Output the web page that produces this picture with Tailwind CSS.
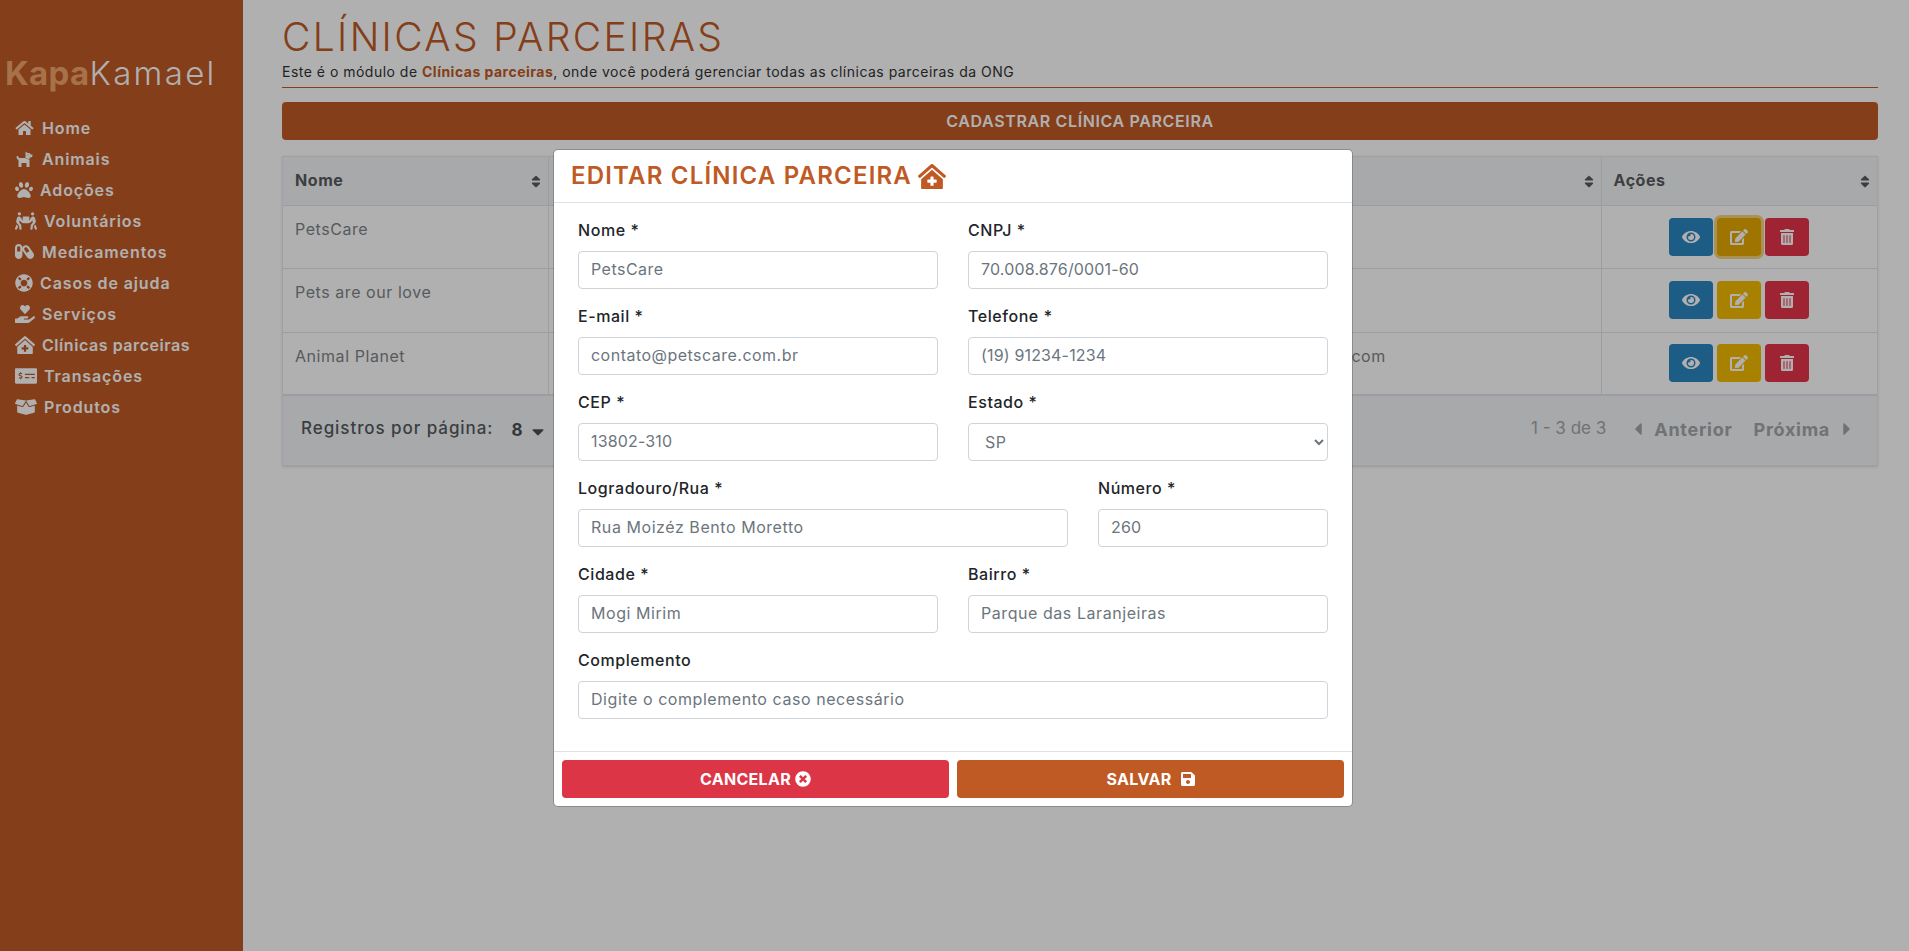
<!DOCTYPE html>
<html lang="pt-BR">
<head>
  <meta charset="UTF-8" />
  <meta name="viewport" content="width=device-width, initial-scale=1.0"/>
  <title>Clínicas parceiras - KapaKamael</title>
  <script src="https://cdn.jsdelivr.net/npm/@tailwindcss/browser@4"></script>
</head>
<body class="relative h-[951px] overflow-hidden bg-white font-[Inter,sans-serif] text-[#212529]">

  <div class="flex h-[951px]">
    <!-- menu lateral -->
    <aside class="w-[243px] shrink-0 bg-[#c05a25] text-white">
      <div class="pt-[49px] pl-[5px] text-[33px] leading-[48px] whitespace-nowrap">
        <span class="font-bold text-[#f0a56b] tracking-[0.01em]">Kapa</span><span class="font-light tracking-[0.07em]">Kamael</span>
      </div>
      <nav class="mt-[15px] pl-[15px] text-[16px] font-semibold tracking-[0.055em]">
        <a class="flex h-[31px] items-center gap-[8px]">
          <svg class="w-[19px] h-[16px]" viewBox="0 0 576 512" fill="currentColor"><path d="M280.37 148.26L96 300.11V464a16 16 0 0 0 16 16l112.06-.29a16 16 0 0 0 15.92-16V368a16 16 0 0 1 16-16h64a16 16 0 0 1 16 16v95.64a16 16 0 0 0 16 16.05L464 480a16 16 0 0 0 16-16V300L295.67 148.26a12.19 12.19 0 0 0-15.3 0zM571.6 251.47L488 182.56V44.05a12 12 0 0 0-12-12h-56a12 12 0 0 0-12 12v72.61L318.47 43a48 48 0 0 0-61 0L4.34 251.47a12 12 0 0 0-1.6 16.9l25.5 31A12 12 0 0 0 45.15 301l235.22-193.74a12.19 12.19 0 0 1 15.3 0L530.9 301a12 12 0 0 0 16.9-1.6l25.5-31a12 12 0 0 0-1.7-16.93z"/></svg>
          Home
        </a>
        <a class="flex h-[31px] items-center gap-[8px]">
          <svg class="w-[19px] h-[16px]" viewBox="0 0 576 512" fill="currentColor"><path fill-rule="evenodd" d="M298.06 224L448 277.55V496a16 16 0 0 1-16 16H368a16 16 0 0 1-16-16V384H192V496a16 16 0 0 1-16 16H112a16 16 0 0 1-16-16V282.09C58.84 268.84 32 233.66 32 192a32 32 0 1 1 64 0 32.06 32.06 0 0 0 32 32zM544 112H480L465.69 83.38A32 32 0 0 0 437.06 64H384L320 16V221.68L448 267.39V208h32a64 64 0 0 0 64-64V128a16 16 0 0 0-16-16zM400 144a16 16 0 1 1 16-16 16 16 0 0 1-16 16z"/></svg>
          Animais
        </a>
        <a class="flex h-[31px] items-center gap-[7px]">
          <svg class="w-[18px] h-[18px]" viewBox="0 0 512 512" fill="currentColor"><path d="M256 224c-79.41 0-192 122.76-192 200.25 0 34.9 26.81 55.75 71.74 55.75 48.84 0 81.09-25.08 120.26-25.08 39.51 0 71.85 25.08 120.26 25.08 44.93 0 71.74-20.85 71.74-55.75C448 346.76 335.41 224 256 224zm-147.28-12.61c-10.4-34.65-42.44-57.09-71.56-50.13-29.12 6.96-44.29 40.69-33.89 75.34 10.4 34.65 42.44 57.09 71.56 50.13 29.12-6.96 44.29-40.69 33.89-75.34zm84.72-20.78c30.94-8.14 46.42-49.94 34.58-93.36s-46.52-72.01-77.46-63.87-46.42 49.94-34.58 93.36c11.84 43.42 46.52 72.02 77.46 63.87zm281.39-29.34c-29.12-6.96-61.15 15.48-71.56 50.13-10.4 34.65 4.77 68.38 33.89 75.34 29.12 6.96 61.15-15.48 71.56-50.13 10.4-34.65-4.77-68.38-33.89-75.34zm-156.27 29.34c30.94 8.14 65.62-20.45 77.46-63.87 11.84-43.42-3.64-85.21-34.58-93.36s-65.62 20.45-77.46 63.87c-11.84 43.42 3.64 85.22 34.58 93.36z"/></svg>
          Adoções
        </a>
        <a class="flex h-[31px] items-center gap-[7px]">
          <svg class="w-[22px] h-[18px]" viewBox="0 0 640 512" fill="currentColor"><path d="M128 96c26.5 0 48-21.5 48-48S154.5 0 128 0 80 21.5 80 48s21.5 48 48 48zm384 0c26.5 0 48-21.5 48-48S538.5 0 512 0s-48 21.5-48 48 21.5 48 48 48zm125.7 372.1l-44-110-41.1 46.4-2 18.2 27.7 69.2c5 12.5 17 20.1 29.7 20.1 4 0 8-.7 11.9-2.3 16.4-6.6 24.4-25.2 17.8-41.6zm-34.2-209.8L585 178.1c-4.6-20-18.6-36.8-37.5-44.9-18.5-8-39-6.7-56.1 3.3-22.7 13.4-39.7 34.5-48.1 59.4L432 229.8 416 240v-96c0-8.8-7.2-16-16-16H240c-8.8 0-16 7.2-16 16v96l-16.1-10.2-11.3-33.9c-8.3-25-25.4-46-48.1-59.4-17.2-10-37.6-11.3-56.1-3.3-18.9 8.1-32.9 24.9-37.5 44.9l-18.4 80.2c-4.6 20 .7 41.2 14.4 56.7l67.2 75.9 10.1 92.6C130 499.8 143.8 512 160 512c1.2 0 2.3-.1 3.5-.2 17.6-1.9 30.2-17.7 28.3-35.3l-10.1-92.8c-1.5-13-6.9-25.1-15.6-35l-43.3-49 17.6-70.3 6.8 20.4c4.1 12.5 11.9 23.4 24.5 32.6l51.1 32.5c4.6 2.9 12.1 4.6 17.2 5h160c5.1-.4 12.6-2.1 17.2-5l51.1-32.5c12.6-9.2 20.4-20 24.5-32.6l6.8-20.4 17.6 70.3-43.3 49c-8.7 9.9-14.1 22-15.6 35l-10.1 92.8c-1.9 17.6 10.8 33.4 28.3 35.3 1.2.1 2.3.2 3.5.2 16.1 0 30-12.1 31.8-28.5l10.1-92.6 67.2-75.9c13.6-15.5 19-36.7 14.4-56.7zM46.3 358.1l-44 110c-6.6 16.4 1.4 35 17.8 41.6 16.8 6.6 35.1-1.7 41.6-17.8l27.7-69.2-2-18.2-41.1-46.4z"/></svg>
          Voluntários
        </a>
        <a class="flex h-[31px] items-center gap-[8px]">
          <svg class="w-[19px] h-[17px]" viewBox="0 0 576 512" fill="currentColor"><path d="M555.3 300.1L424.2 112.8C401.9 81 366.4 64 330.4 64c-22.6 0-45.5 6.7-65.5 20.7-19.7 13.8-33.7 32.8-41.5 53.8C220.5 79.2 172 32 112 32 50.1 32 0 82.1 0 144v224c0 61.9 50.1 112 112 112s112-50.1 112-112V218.9c3.3 8.6 7.3 17.1 12.8 25L368 431.2c22.2 31.8 57.7 48.8 93.8 48.8 22.7 0 45.5-6.7 65.5-20.7 51.7-36.2 64.2-107.5 28-159.2zM160 256H64V144c0-26.5 21.5-48 48-48s48 21.5 48 48v112zm194.8 44.9l-65.6-93.7c-7.7-11-10.7-24.4-8.3-37.6 2.3-13.2 9.7-24.8 20.7-32.5 8.5-6 18.5-9.1 28.8-9.1 16.5 0 31.9 8 41.3 21.5l65.6 93.7-82.5 57.7z"/></svg>
          Medicamentos
        </a>
        <a class="flex h-[31px] items-center gap-[7px]">
          <svg class="w-[18px] h-[18px]" viewBox="0 0 512 512" fill="currentColor"><path d="M256 8C119.033 8 8 119.033 8 256s111.033 248 248 248 248-111.033 248-248S392.967 8 256 8zm173.696 119.559l-63.399 63.399c-10.987-18.559-26.67-34.252-45.255-45.255l63.399-63.399a218.396 218.396 0 0 1 45.255 45.255zM256 352c-53.019 0-96-42.981-96-96s42.981-96 96-96 96 42.981 96 96-42.981 96-96 96zM127.559 82.304l63.399 63.399c-18.559 10.987-34.252 26.67-45.255 45.255l-63.399-63.399a218.372 218.372 0 0 1 45.255-45.255zM82.304 384.441l63.399-63.399c10.987 18.559 26.67 34.252 45.255 45.255l-63.399 63.399a218.396 218.396 0 0 1-45.255-45.255zm302.137 45.255l-63.399-63.399c18.559-10.987 34.252-26.67 45.255-45.255l63.399 63.399a218.403 218.403 0 0 1-45.255 45.255z"/></svg>
          Casos de ajuda
        </a>
        <a class="flex h-[31px] items-center gap-[7px]">
          <svg class="w-[20px] h-[18px]" viewBox="0 0 576 512" fill="currentColor"><path d="M275.3 250.5c7 7.4 18.4 7.4 25.5 0l108.9-114.2c31.6-33.2 29.8-88.2-5.6-118.8-30.8-26.7-76.7-21.9-104.9 7.7L288 36.9l-11.1-11.6C248.7-4.4 202.8-9.2 172 17.5c-35.3 30.6-37.2 85.6-5.6 118.8l108.9 114.2zm290 77.6c-11.8-10.7-30.2-10-42.6 0L430.3 402c-11.3 9.1-25.4 14-40 14H272c-8.8 0-16-7.2-16-16s7.2-16 16-16h78.3c15.9 0 30.7-10.9 33.3-26.6 3.3-20-12.1-37.4-31.6-37.4H192c-27 0-53.1 9.3-74.1 26.3L71.4 384H16c-8.8 0-16 7.2-16 16v96c0 8.8 7.2 16 16 16h356.8c14.5 0 28.6-4.9 40-14L564 377c15.2-12.1 16.4-35.3 1.3-48.9z"/></svg>
          Serviços
        </a>
        <a class="flex h-[31px] items-center gap-[7px]">
          <svg class="w-[20px] h-[18px]" viewBox="0 0 576 512" fill="currentColor"><path d="M288 115L69.47 307.71c-1.62 1.46-3.69 2.14-5.47 3.35V496a16 16 0 0 0 16 16h416a16 16 0 0 0 16-16V311.1c-1.7-1.16-3.72-1.82-5.26-3.2zm96 261a8 8 0 0 1-8 8h-56v56a8 8 0 0 1-8 8h-48a8 8 0 0 1-8-8v-56h-56a8 8 0 0 1-8-8v-48a8 8 0 0 1 8-8h56v-56a8 8 0 0 1 8-8h48a8 8 0 0 1 8 8v56h56a8 8 0 0 1 8 8zm186.69-139.72l-255.94-226a39.85 39.85 0 0 0-53.45 0l-256 226a16 16 0 0 0-1.21 22.6L25.5 282.7a16 16 0 0 0 22.6 1.21L277.42 81.63a16 16 0 0 1 21.17 0L527.91 283.9a16 16 0 0 0 22.6-1.21l21.4-23.82a16 16 0 0 0-1.22-22.59z"/></svg>
          <span class="tracking-[0.035em]">Clínicas parceiras</span>
        </a>
        <a class="flex h-[31px] items-center gap-[7px]">
          <svg class="w-[22px] h-[18px]" viewBox="0 0 640 512" fill="currentColor"><path d="M608 32H32C14.33 32 0 46.33 0 64v384c0 17.67 14.33 32 32 32h576c17.67 0 32-14.33 32-32V64c0-17.67-14.33-32-32-32zM176 327.88V344c0 4.42-3.58 8-8 8h-16c-4.42 0-8-3.58-8-8v-16.29c-11.29-.58-22.27-4.52-31.37-11.35-3.9-2.93-4.1-8.77-.57-12.14l11.75-11.21c2.77-2.64 6.89-2.76 10.13-.73 3.87 2.42 8.26 3.72 12.82 3.72h28.11c6.5 0 11.8-5.92 11.8-13.19 0-5.95-3.61-11.19-8.77-12.73l-45-13.5c-18.59-5.58-31.58-23.42-31.58-43.39 0-24.52 19.05-44.44 42.67-45.07V152c0-4.42 3.58-8 8-8h16c4.42 0 8 3.58 8 8v16.29c11.29.58 22.27 4.51 31.37 11.35 3.9 2.93 4.1 8.77.57 12.14l-11.75 11.21c-2.77 2.64-6.89 2.76-10.13.73-3.87-2.43-8.26-3.72-12.82-3.72h-28.11c-6.5 0-11.8 5.92-11.8 13.19 0 5.95 3.61 11.19 8.77 12.73l45 13.5c18.59 5.58 31.58 23.42 31.58 43.39 0 24.53-19.05 44.44-42.67 45.07zM416 312c0 4.42-3.58 8-8 8H296c-4.42 0-8-3.58-8-8v-16c0-4.42 3.58-8 8-8h112c4.42 0 8 3.58 8 8v16zm160 0c0 4.42-3.58 8-8 8h-80c-4.42 0-8-3.58-8-8v-16c0-4.42 3.58-8 8-8h80c4.42 0 8 3.58 8 8v16zm0-96c0 4.42-3.58 8-8 8H296c-4.42 0-8-3.58-8-8v-16c0-4.42 3.58-8 8-8h272c4.42 0 8 3.58 8 8v16z"/></svg>
          Transações
        </a>
        <a class="flex h-[31px] items-center gap-[7px]">
          <svg class="w-[22px] h-[18px]" viewBox="0 0 640 512" fill="currentColor"><path d="M425.7 256c-16.9 0-32.8-9-41.4-23.4L320 126l-64.2 106.6c-8.7 14.5-24.6 23.5-41.5 23.5-4.5 0-9-.6-13.3-1.9L64 215v178c0 14.7 10 27.5 24.2 31l216.2 54.1c10.2 2.5 20.9 2.5 31 0L551.8 424c14.2-3.6 24.2-16.4 24.2-31V215l-137 39.1c-4.3 1.3-8.8 1.9-13.3 1.9zm212.6-112.2L586.8 41c-3.1-6.2-9.8-9.8-16.7-8.9L320 64l91.7 152.1c3.8 6.3 11.4 9.3 18.5 7.3l197.9-56.5c9.9-2.9 14.7-13.9 10.2-23.1zM53.2 41L1.7 143.8c-4.6 9.2.3 20.2 10.1 23l197.9 56.5c7.1 2 14.7-1 18.5-7.3L320 64 69.8 32.1c-6.9-.8-13.5 2.7-16.6 8.9z"/></svg>
          Produtos
        </a>
      </nav>
    </aside>

    <!-- conteudo -->
    <main class="flex-1 min-w-0 pl-[39px] pr-[31px]">
      <h1 class="pt-[13px] text-[39px] leading-[48px] font-light text-[#c05a25] tracking-[0.06em]">CLÍNICAS PARCEIRAS</h1>
      <p class="text-[14px] leading-[21px] tracking-[0.035em] text-[#333]">Este é o módulo de <b class="font-bold text-[#c05a25]">Clínicas parceiras</b>, onde você poderá gerenciar todas as clínicas parceiras da ONG</p>
      <hr class="mt-[5px] border-0 border-t border-[#c05a25]" />
      <button class="mt-[14px] block w-full h-[38px] rounded-[4px] bg-[#c05a25] text-white text-[16px] font-semibold tracking-[0.04em]">CADASTRAR CLÍNICA PARCEIRA</button>

      <div class="mt-[16px] border border-[#e6e6ee] shadow-sm">
        <table class="w-full table-fixed border-collapse text-[16px] tracking-[0.035em]">
          <colgroup>
            <col class="w-[265px]" />
            <col class="w-[567px]" />
            <col />
            <col class="w-[276px]" />
          </colgroup>
          <thead class="bg-[#f4f5f7] text-[#585b5f]">
            <tr class="h-[48px] border-b border-[#e2e4ea]">
              <th class="relative border-r border-[#e2e4ea] px-[12px] pb-[1px] text-left font-bold">Nome
                <svg class="absolute right-[7px] top-[17px] w-[10px] h-[15px]" viewBox="0 0 320 512" fill="currentColor"><path d="M41 288h238c21.4 0 32.1 25.9 17 41L177 448c-9.4 9.4-24.6 9.4-33.9 0L24 329c-15.1-15.1-4.4-41 17-41zm255-105L177 64c-9.4-9.4-24.6-9.4-33.9 0L24 183c-15.1 15.1-4.4 41 17 41h238c21.4 0 32.1-25.9 17-41z"/></svg>
              </th>
              <th class="border-r border-[#e2e4ea] px-[12px] text-left font-bold">CNPJ</th>
              <th class="relative border-r border-[#e2e4ea] px-[12px] text-left font-bold">E-mail
                <svg class="absolute right-[7px] top-[17px] w-[10px] h-[15px]" viewBox="0 0 320 512" fill="currentColor"><path d="M41 288h238c21.4 0 32.1 25.9 17 41L177 448c-9.4 9.4-24.6 9.4-33.9 0L24 329c-15.1-15.1-4.4-41 17-41zm255-105L177 64c-9.4-9.4-24.6-9.4-33.9 0L24 183c-15.1 15.1-4.4 41 17 41h238c21.4 0 32.1-25.9 17-41z"/></svg>
              </th>
              <th class="relative px-[12px] pb-[1px] text-left font-bold">Ações
                <svg class="absolute right-[7px] top-[17px] w-[10px] h-[15px]" viewBox="0 0 320 512" fill="currentColor"><path d="M41 288h238c21.4 0 32.1 25.9 17 41L177 448c-9.4 9.4-24.6 9.4-33.9 0L24 329c-15.1-15.1-4.4-41 17-41zm255-105L177 64c-9.4-9.4-24.6-9.4-33.9 0L24 183c-15.1 15.1-4.4 41 17 41h238c21.4 0 32.1-25.9 17-41z"/></svg>
              </th>
            </tr>
          </thead>
          <tbody class="text-[#7f8489]">
            <tr class="h-[63px] border-b border-[#e2e4ea]">
              <td class="border-r border-[#e2e4ea] px-[12px] pt-[11px] align-top">PetsCare</td>
              <td class="border-r border-[#e2e4ea] px-[12px] pt-[11px] align-top">70.008.876/0001-60</td>
              <td class="border-r border-[#e2e4ea] px-[12px] pt-[11px] align-top">contato@petscare.com.br</td>
              <td class="align-middle">
                <div class="flex justify-center gap-[4px]">
                  <button class="flex h-[38px] w-[44px] items-center justify-center rounded-[4px] bg-[#2a86c1] text-white">
                    <svg class="w-[18px] h-[16px]" viewBox="0 0 576 512" fill="currentColor"><path d="M572.52 241.4C518.29 135.59 410.93 64 288 64S57.68 135.64 3.48 241.41a32.35 32.35 0 0 0 0 29.19C57.71 376.41 165.07 448 288 448s230.32-71.64 284.52-177.41a32.35 32.35 0 0 0 0-29.19zM288 400a144 144 0 1 1 144-144 143.93 143.93 0 0 1-144 144zm0-240a95.31 95.31 0 0 0-25.31 3.79 47.85 47.85 0 0 1-66.9 66.9A95.78 95.78 0 1 0 288 160z"/></svg>
                  </button>
                  <button class="flex h-[38px] w-[44px] items-center justify-center rounded-[4px] bg-[#e8a900] text-white ring-[3px] ring-[#e8a900]/50">
                    <svg class="w-[18px] h-[16px]" viewBox="0 0 576 512" fill="currentColor"><path d="M402.6 83.2l90.2 90.2c3.8 3.8 3.8 10 0 13.8L274.4 405.6l-92.8 10.3c-12.4 1.4-22.9-9.1-21.5-21.5l10.3-92.8L388.8 83.2c3.8-3.8 10-3.8 13.8 0zm162-22.9l-48.8-48.8c-15.2-15.2-39.9-15.2-55.2 0l-35.4 35.4c-3.8 3.8-3.8 10 0 13.8l90.2 90.2c3.8 3.8 10 3.8 13.8 0l35.4-35.4c15.2-15.3 15.2-40 0-55.2zM384 346.2V448H64V128h229.8c3.2 0 6.2-1.3 8.5-3.5l40-40c7.6-7.6 2.2-20.5-8.5-20.5H48C21.5 64 0 85.5 0 112v352c0 26.5 21.5 48 48 48h352c26.5 0 48-21.5 48-48V306.2c0-10.7-12.9-16-20.5-8.5l-40 40c-2.2 2.3-3.5 5.3-3.5 8.5z"/></svg>
                  </button>
                  <button class="flex h-[38px] w-[44px] items-center justify-center rounded-[4px] bg-[#e5344a] text-white">
                    <svg class="w-[14px] h-[16px]" viewBox="0 0 448 512" fill="currentColor"><path d="M32 464a48 48 0 0 0 48 48h288a48 48 0 0 0 48-48V128H32zm272-256a16 16 0 0 1 32 0v224a16 16 0 0 1-32 0zm-96 0a16 16 0 0 1 32 0v224a16 16 0 0 1-32 0zm-96 0a16 16 0 0 1 32 0v224a16 16 0 0 1-32 0zM432 32H312l-9.4-18.7A24 24 0 0 0 281.1 0H166.8a23.72 23.72 0 0 0-21.4 13.3L136 32H16A16 16 0 0 0 0 48v32a16 16 0 0 0 16 16h416a16 16 0 0 0 16-16V48a16 16 0 0 0-16-16z"/></svg>
                  </button>
                </div>
              </td>
            </tr>
            <tr class="h-[64px] border-b border-[#e2e4ea]">
              <td class="border-r border-[#e2e4ea] px-[12px] pt-[11px] align-top">Pets are our love</td>
              <td class="border-r border-[#e2e4ea] px-[12px] pt-[11px] align-top">12.345.678/0001-90</td>
              <td class="border-r border-[#e2e4ea] px-[12px] pt-[11px] align-top">contato@petslove.com</td>
              <td class="align-middle">
                <div class="flex justify-center gap-[4px]">
                  <button class="flex h-[38px] w-[44px] items-center justify-center rounded-[4px] bg-[#2a86c1] text-white">
                    <svg class="w-[18px] h-[16px]" viewBox="0 0 576 512" fill="currentColor"><path d="M572.52 241.4C518.29 135.59 410.93 64 288 64S57.68 135.64 3.48 241.41a32.35 32.35 0 0 0 0 29.19C57.71 376.41 165.07 448 288 448s230.32-71.64 284.52-177.41a32.35 32.35 0 0 0 0-29.19zM288 400a144 144 0 1 1 144-144 143.93 143.93 0 0 1-144 144zm0-240a95.31 95.31 0 0 0-25.31 3.79 47.85 47.85 0 0 1-66.9 66.9A95.78 95.78 0 1 0 288 160z"/></svg>
                  </button>
                  <button class="flex h-[38px] w-[44px] items-center justify-center rounded-[4px] bg-[#f5bb00] text-white">
                    <svg class="w-[18px] h-[16px]" viewBox="0 0 576 512" fill="currentColor"><path d="M402.6 83.2l90.2 90.2c3.8 3.8 3.8 10 0 13.8L274.4 405.6l-92.8 10.3c-12.4 1.4-22.9-9.1-21.5-21.5l10.3-92.8L388.8 83.2c3.8-3.8 10-3.8 13.8 0zm162-22.9l-48.8-48.8c-15.2-15.2-39.9-15.2-55.2 0l-35.4 35.4c-3.8 3.8-3.8 10 0 13.8l90.2 90.2c3.8 3.8 10 3.8 13.8 0l35.4-35.4c15.2-15.3 15.2-40 0-55.2zM384 346.2V448H64V128h229.8c3.2 0 6.2-1.3 8.5-3.5l40-40c7.6-7.6 2.2-20.5-8.5-20.5H48C21.5 64 0 85.5 0 112v352c0 26.5 21.5 48 48 48h352c26.5 0 48-21.5 48-48V306.2c0-10.7-12.9-16-20.5-8.5l-40 40c-2.2 2.3-3.5 5.3-3.5 8.5z"/></svg>
                  </button>
                  <button class="flex h-[38px] w-[44px] items-center justify-center rounded-[4px] bg-[#e5344a] text-white">
                    <svg class="w-[14px] h-[16px]" viewBox="0 0 448 512" fill="currentColor"><path d="M32 464a48 48 0 0 0 48 48h288a48 48 0 0 0 48-48V128H32zm272-256a16 16 0 0 1 32 0v224a16 16 0 0 1-32 0zm-96 0a16 16 0 0 1 32 0v224a16 16 0 0 1-32 0zm-96 0a16 16 0 0 1 32 0v224a16 16 0 0 1-32 0zM432 32H312l-9.4-18.7A24 24 0 0 0 281.1 0H166.8a23.72 23.72 0 0 0-21.4 13.3L136 32H16A16 16 0 0 0 0 48v32a16 16 0 0 0 16 16h416a16 16 0 0 0 16-16V48a16 16 0 0 0-16-16z"/></svg>
                  </button>
                </div>
              </td>
            </tr>
            <tr class="h-[63px] border-b-2 border-[#e2e4ea]">
              <td class="border-r border-[#e2e4ea] px-[12px] pt-[11px] align-top">Animal Planet</td>
              <td class="border-r border-[#e2e4ea] px-[12px] pt-[11px] align-top">98.765.432/0001-10</td>
              <td class="border-r border-[#e2e4ea] px-[12px] pt-[11px] align-top">atendimento@animalplanet.com</td>
              <td class="align-middle">
                <div class="flex justify-center gap-[4px]">
                  <button class="flex h-[38px] w-[44px] items-center justify-center rounded-[4px] bg-[#2a86c1] text-white">
                    <svg class="w-[18px] h-[16px]" viewBox="0 0 576 512" fill="currentColor"><path d="M572.52 241.4C518.29 135.59 410.93 64 288 64S57.68 135.64 3.48 241.41a32.35 32.35 0 0 0 0 29.19C57.71 376.41 165.07 448 288 448s230.32-71.64 284.52-177.41a32.35 32.35 0 0 0 0-29.19zM288 400a144 144 0 1 1 144-144 143.93 143.93 0 0 1-144 144zm0-240a95.31 95.31 0 0 0-25.31 3.79 47.85 47.85 0 0 1-66.9 66.9A95.78 95.78 0 1 0 288 160z"/></svg>
                  </button>
                  <button class="flex h-[38px] w-[44px] items-center justify-center rounded-[4px] bg-[#f5bb00] text-white">
                    <svg class="w-[18px] h-[16px]" viewBox="0 0 576 512" fill="currentColor"><path d="M402.6 83.2l90.2 90.2c3.8 3.8 3.8 10 0 13.8L274.4 405.6l-92.8 10.3c-12.4 1.4-22.9-9.1-21.5-21.5l10.3-92.8L388.8 83.2c3.8-3.8 10-3.8 13.8 0zm162-22.9l-48.8-48.8c-15.2-15.2-39.9-15.2-55.2 0l-35.4 35.4c-3.8 3.8-3.8 10 0 13.8l90.2 90.2c3.8 3.8 10 3.8 13.8 0l35.4-35.4c15.2-15.3 15.2-40 0-55.2zM384 346.2V448H64V128h229.8c3.2 0 6.2-1.3 8.5-3.5l40-40c7.6-7.6 2.2-20.5-8.5-20.5H48C21.5 64 0 85.5 0 112v352c0 26.5 21.5 48 48 48h352c26.5 0 48-21.5 48-48V306.2c0-10.7-12.9-16-20.5-8.5l-40 40c-2.2 2.3-3.5 5.3-3.5 8.5z"/></svg>
                  </button>
                  <button class="flex h-[38px] w-[44px] items-center justify-center rounded-[4px] bg-[#e5344a] text-white">
                    <svg class="w-[14px] h-[16px]" viewBox="0 0 448 512" fill="currentColor"><path d="M32 464a48 48 0 0 0 48 48h288a48 48 0 0 0 48-48V128H32zm272-256a16 16 0 0 1 32 0v224a16 16 0 0 1-32 0zm-96 0a16 16 0 0 1 32 0v224a16 16 0 0 1-32 0zm-96 0a16 16 0 0 1 32 0v224a16 16 0 0 1-32 0zM432 32H312l-9.4-18.7A24 24 0 0 0 281.1 0H166.8a23.72 23.72 0 0 0-21.4 13.3L136 32H16A16 16 0 0 0 0 48v32a16 16 0 0 0 16 16h416a16 16 0 0 0 16-16V48a16 16 0 0 0-16-16z"/></svg>
                  </button>
                </div>
              </td>
            </tr>
          </tbody>
        </table>
        <div class="flex h-[69px] items-center justify-between bg-[#f4f5f7] pb-[3px] pl-[18px] pr-[26px]">
          <div class="flex items-center text-[17px]">
            <span class="font-medium tracking-[0.055em] text-[#555b62]">Registros por página:</span>
            <span class="ml-[18px] mt-[4px] font-bold text-[#495057]">8</span>
            <svg class="ml-[9px] mt-[5px] w-[12px] h-[19px] text-[#495057]" viewBox="0 0 320 512" fill="currentColor"><path d="M31.3 192h257.3c17.8 0 26.7 21.5 14.1 34.1L174.1 354.8c-7.8 7.8-20.5 7.8-28.3 0L17.2 226.1C4.6 213.5 13.5 192 31.3 192z"/></svg>
          </div>
          <div class="flex items-center text-[#a3a7ab]">
            <span class="text-[17px]">1 - 3 de 3</span>
            <svg class="ml-[28px] w-[8px] h-[20px]" viewBox="0 0 192 512" fill="currentColor"><path d="M192 127.338v257.324c0 17.818-21.543 26.741-34.142 14.142L29.196 270.142c-7.81-7.81-7.81-20.474 0-28.284l128.662-128.662c12.599-12.6 34.142-3.676 34.142 14.142z"/></svg>
            <span class="ml-[12px] text-[18px] font-bold tracking-[0.04em]">Anterior</span>
            <span class="ml-[21px] text-[18px] font-bold tracking-[0.04em]">Próxima</span>
            <svg class="ml-[13px] w-[8px] h-[20px]" viewBox="0 0 192 512" fill="currentColor"><path d="M0 384.662V127.338c0-17.818 21.543-26.741 34.142-14.142l128.662 128.662c7.81 7.81 7.81 20.474 0 28.284L34.142 398.804C21.543 411.404 0 402.48 0 384.662z"/></svg>
          </div>
        </div>
      </div>
    </main>
  </div>

  <!-- fundo do modal -->
  <div class="absolute inset-0 bg-black/[0.31]"></div>

  <!-- modal editar -->
  <div class="absolute left-[553px] top-[149px] w-[800px] rounded-[5px] border border-black/20 bg-white bg-clip-padding">
    <div class="flex h-[53px] items-center gap-[6px] border-b border-[#dee2e6] pl-[17px]">
      <h2 class="text-[24px] font-semibold tracking-[0.05em] text-[#c05a25]">EDITAR CLÍNICA PARCEIRA</h2>
      <svg class="w-[28px] h-[25px] text-[#c05a25]" viewBox="0 0 576 512" fill="currentColor"><path d="M288 115L69.47 307.71c-1.62 1.46-3.69 2.14-5.47 3.35V496a16 16 0 0 0 16 16h416a16 16 0 0 0 16-16V311.1c-1.7-1.16-3.72-1.82-5.26-3.2zm96 261a8 8 0 0 1-8 8h-56v56a8 8 0 0 1-8 8h-48a8 8 0 0 1-8-8v-56h-56a8 8 0 0 1-8-8v-48a8 8 0 0 1 8-8h56v-56a8 8 0 0 1 8-8h48a8 8 0 0 1 8 8v56h56a8 8 0 0 1 8 8zm186.69-139.72l-255.94-226a39.85 39.85 0 0 0-53.45 0l-256 226a16 16 0 0 0-1.21 22.6L25.5 282.7a16 16 0 0 0 22.6 1.21L277.42 81.63a16 16 0 0 1 21.17 0L527.91 283.9a16 16 0 0 0 22.6-1.21l21.4-23.82a16 16 0 0 0-1.22-22.59z"/></svg>
    </div>

    <form class="grid grid-cols-12 gap-x-[30px] gap-y-[16px] px-[24px] pt-[16px] pb-[32px] text-[16px] tracking-[0.035em]">
      <div class="col-span-6">
        <label class="mb-[8px] block h-[24px] font-medium leading-[22px]">Nome *</label>
        <input type="text" value="PetsCare" class="block h-[38px] w-full rounded-[4px] border border-[#ced4da] px-[12px] pb-[2px] text-[#6c757d] tracking-[0.03em]" />
      </div>
      <div class="col-span-6">
        <label class="mb-[8px] block h-[24px] font-medium leading-[22px]">CNPJ *</label>
        <input type="text" value="70.008.876/0001-60" class="block h-[38px] w-full rounded-[4px] border border-[#ced4da] px-[12px] pb-[2px] text-[#6c757d] tracking-[0.01em]" />
      </div>
      <div class="col-span-6">
        <label class="mb-[8px] block h-[24px] font-medium leading-[22px]">E-mail *</label>
        <input type="text" value="contato@petscare.com.br" class="block h-[38px] w-full rounded-[4px] border border-[#ced4da] px-[12px] pb-[2px] text-[#6c757d] tracking-[0.03em]" />
      </div>
      <div class="col-span-6">
        <label class="mb-[8px] block h-[24px] font-medium leading-[22px]">Telefone *</label>
        <input type="text" value="(19) 91234-1234" class="block h-[38px] w-full rounded-[4px] border border-[#ced4da] px-[12px] pb-[2px] text-[#6c757d] tracking-[0.01em]" />
      </div>
      <div class="col-span-6">
        <label class="mb-[8px] block h-[24px] font-medium leading-[22px]">CEP *</label>
        <input type="text" value="13802-310" class="block h-[38px] w-full rounded-[4px] border border-[#ced4da] px-[12px] pb-[2px] text-[#6c757d] tracking-[0.01em]" />
      </div>
      <div class="col-span-6">
        <label class="mb-[8px] block h-[24px] font-medium leading-[22px]">Estado *</label>
        <select class="block h-[38px] w-full rounded-[4px] border border-[#ced4da] bg-white px-[12px] text-[#6c757d] tracking-[0.035em]">
          <option>SP</option>
        </select>
      </div>
      <div class="col-span-8">
        <label class="mb-[8px] block h-[24px] font-medium leading-[22px]">Logradouro/Rua *</label>
        <input type="text" value="Rua Moizéz Bento Moretto" class="block h-[38px] w-full rounded-[4px] border border-[#ced4da] px-[12px] pb-[2px] text-[#6c757d] tracking-[0.035em]" />
      </div>
      <div class="col-span-4">
        <label class="mb-[8px] block h-[24px] font-medium leading-[22px]">Número *</label>
        <input type="text" value="260" class="block h-[38px] w-full rounded-[4px] border border-[#ced4da] px-[12px] pb-[2px] text-[#6c757d] tracking-[0.01em]" />
      </div>
      <div class="col-span-6">
        <label class="mb-[8px] block h-[24px] font-medium leading-[22px]">Cidade *</label>
        <input type="text" value="Mogi Mirim" class="block h-[38px] w-full rounded-[4px] border border-[#ced4da] px-[12px] pb-[2px] text-[#6c757d] tracking-[0.035em]" />
      </div>
      <div class="col-span-6">
        <label class="mb-[8px] block h-[24px] font-medium leading-[22px]">Bairro *</label>
        <input type="text" value="Parque das Laranjeiras" class="block h-[38px] w-full rounded-[4px] border border-[#ced4da] px-[12px] pb-[2px] text-[#6c757d] tracking-[0.035em]" />
      </div>
      <div class="col-span-12">
        <label class="mb-[8px] block h-[24px] font-medium leading-[22px]">Complemento</label>
        <input type="text" placeholder="Digite o complemento caso necessário" class="block h-[38px] w-full rounded-[4px] border border-[#ced4da] px-[12px] pb-[2px] text-[#6c757d] tracking-[0.035em] placeholder:text-[#6c757d]" />
      </div>
    </form>

    <div class="flex gap-[8px] border-t border-[#dee2e6] p-[8px] text-[16px] font-bold tracking-[0.02em] text-white">
      <button class="flex h-[38px] flex-1 items-center justify-center gap-[4px] rounded-[4px] bg-[#dc3545] pb-[1px]">
        CANCELAR
        <svg class="w-[16px] h-[16px]" viewBox="0 0 512 512" fill="currentColor"><path d="M256 8C119 8 8 119 8 256s111 248 248 248 248-111 248-248S393 8 256 8zm121.6 313.1c4.7 4.7 4.7 12.3 0 17L338 377.6c-4.7 4.7-12.3 4.7-17 0L256 312l-65.1 65.6c-4.7 4.7-12.3 4.7-17 0L134.4 338c-4.7-4.7-4.7-12.3 0-17l65.6-65-65.6-65.1c-4.7-4.7-4.7-12.3 0-17l39.6-39.6c4.7-4.7 12.3-4.7 17 0l65 65.7 65.1-65.6c4.7-4.7 12.3-4.7 17 0l39.6 39.6c4.7 4.7 4.7 12.3 0 17L312 256l65.6 65.1z"/></svg>
      </button>
      <button class="flex h-[38px] flex-1 items-center justify-center gap-[9px] rounded-[4px] bg-[#c05a25] pb-[1px]">
        SALVAR
        <svg class="w-[14px] h-[16px]" viewBox="0 0 448 512" fill="currentColor"><path d="M433.941 129.941l-83.882-83.882A48 48 0 0 0 316.118 32H48C21.49 32 0 53.49 0 80v352c0 26.51 21.49 48 48 48h352c26.51 0 48-21.49 48-48V163.882a48 48 0 0 0-14.059-33.941zM224 416c-35.346 0-64-28.654-64-64 0-35.346 28.654-64 64-64s64 28.654 64 64c0 35.346-28.654 64-64 64zm96-304.52V212c0 6.627-5.373 12-12 12H76c-6.627 0-12-5.373-12-12V108c0-6.627 5.373-12 12-12h228.52c3.183 0 6.235 1.264 8.485 3.515l3.48 3.48A11.996 11.996 0 0 1 320 111.48z"/></svg>
      </button>
    </div>
  </div>

</body>
</html>
